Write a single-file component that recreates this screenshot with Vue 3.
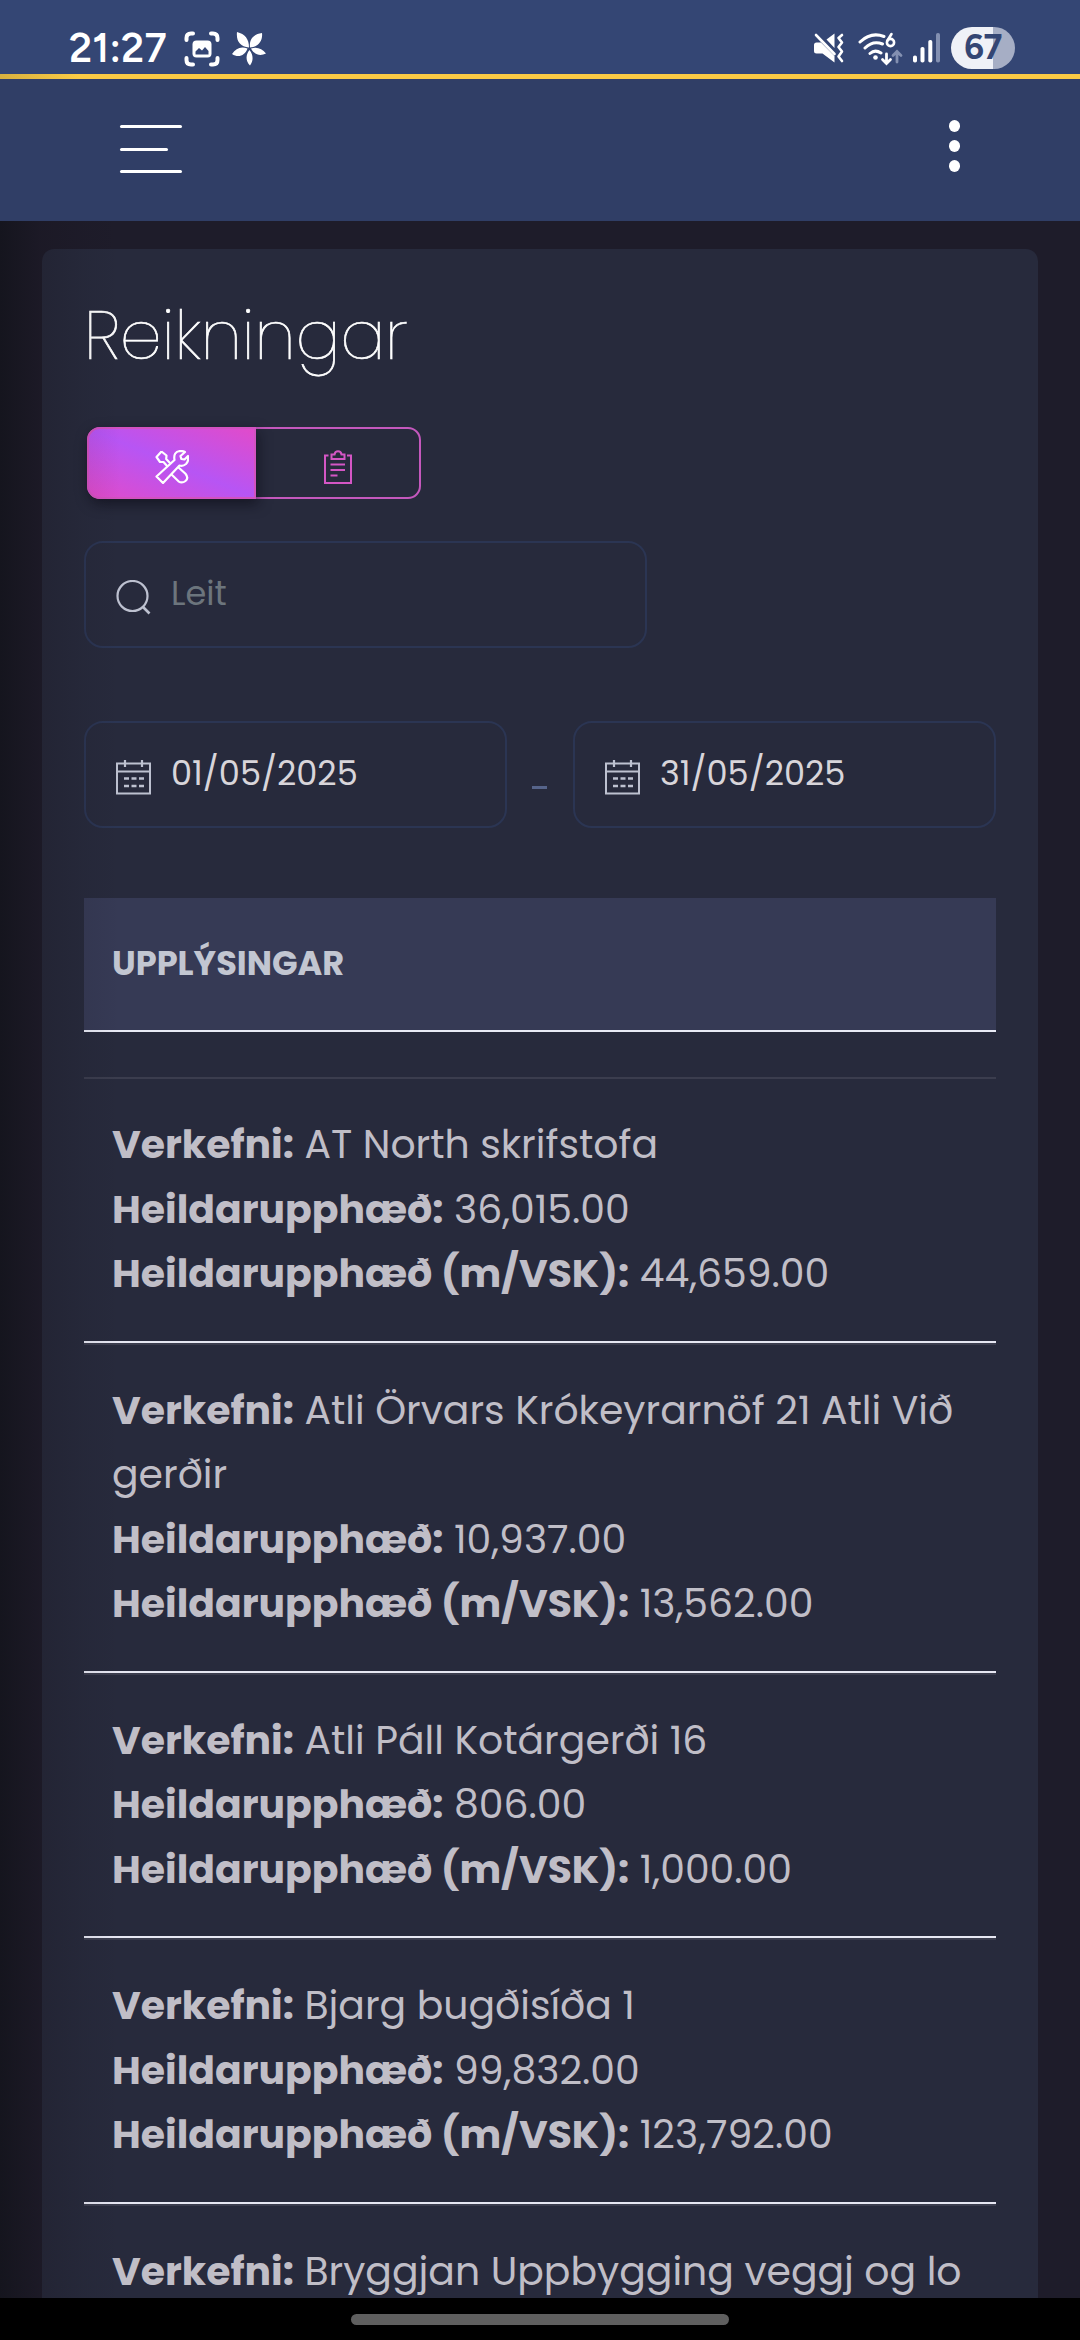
<script setup>
const rows = [
  { name: 'AT North skrifstofa', sum: '36,015.00', vat: '44,659.00' },
  { name: 'Atli Örvars Krókeyrarnöf 21 Atli Við gerðir', sum: '10,937.00', vat: '13,562.00' },
  { name: 'Atli Páll Kotárgerði 16', sum: '806.00', vat: '1,000.00' },
  { name: 'Bjarg bugðisíða 1', sum: '99,832.00', vat: '123,792.00' },
  { name: 'Bryggjan Uppbygging veggj og lo' },
]
</script>

<template>
  <div class="screen">
    <div class="status">
      <span class="clock">21:27</span>
      <svg class="shot" viewBox="0 0 36 36" width="36" height="36" fill="none" stroke="#fff" stroke-width="4" stroke-linecap="round">
        <path d="M2.5 9V7q0-4.500 4.500-4.500H9M27 2.500h2q4.500 0 4.500 4.500v2M33.500 27v2q0 4.500-4.500 4.500h-2M9 33.500H7q-4.500 0-4.500-4.500v-2" />
        <rect x="8.500" y="9.500" width="19" height="17" rx="4" fill="#fff" stroke="none" />
        <path d="M11.500 23.500v-3l3.500-3.500 3 2.500 3-3.500 3.500 4v3.500z" fill="#354675" stroke="none" />
      </svg>
      <svg class="flower" viewBox="0 0 34 34" width="34" height="34" fill="#fff">
        <path d="M17 15.500C8 15 4 9 5 0c8 2 12 7 12 15.500zM18 15.500C17 8 21 2 30 1c1 8-4 14-12 14.500zM19 16.500c6-2 11 0 15 5-6 3-12 1-15-5zM15.500 16.500C9 14 4 16 0 22c6 4 13 2 15.500-5.500zM17.500 18c4 5 4 11 .5 15.500C13.500 29 13.500 23 17.500 18z" />
      </svg>
      <div class="sys">
        <svg viewBox="0 0 30 30" width="30" height="30">
          <path fill="#fff" d="M0 12q0-2.500 2.500-2.500H7L20.500 23v6.500L8.500 20.500h-6Q0 20.500 0 18zM12.500 6.500l8-6V15z" />
          <path d="M2 2l18.500 19" fill="none" stroke="#fff" stroke-width="2.600" stroke-linecap="round" />
          <path d="M28 2l-3.500 3 3.500 4.500-3.500 4.500L28 18.500 24.500 23.500 28 28" fill="none" stroke="#fff" stroke-width="2.600" stroke-linecap="round" stroke-linejoin="round" />
        </svg>
        <svg class="wifi" viewBox="0 0 46 34" width="46" height="34" fill="none" stroke="#fff" stroke-width="3" stroke-linecap="round">
          <path d="M2 10Q13-.5 26 4.500M7 16q8-8 17.500-4M12 21.500q5-4.500 11-.5" />
          <circle cx="17.500" cy="25.500" r="2.300" fill="#fff" stroke="none" />
          <path d="M33.500 2l-4 6.500" stroke-width="2.600" /><circle cx="32.500" cy="10.500" r="3.600" stroke-width="2.600" />
          <path d="M28.500 22v9.500M24.500 27.500l4 4 4-4" stroke-width="2.800" />
          <path d="M39 30v-10.500M35 23.500l4-4 4 4" stroke="#8390b1" stroke-width="2.800" />
        </svg>
        <svg class="signal" viewBox="0 0 28 30" width="28" height="30">
          <g fill="#fff"><rect x="0" y="22.500" width="4" height="7" rx="1.800" /><rect x="7.500" y="14" width="4" height="15.500" rx="1.800" /><rect x="15.300" y="7" width="4" height="22.500" rx="1.800" /></g>
          <rect x="23" y="0" width="4" height="29.500" rx="1.800" fill="#8390b1" />
        </svg>
        <div class="battery">67</div>
      </div>
    </div>

    <header class="bar">
      <div class="menu"><i></i><i class="short"></i><i></i></div>
      <div class="dots"><i></i><i></i><i></i></div>
    </header>

    <main class="page">
      <section class="card">
        <h1>Reikningar</h1>
        <div class="toggle">
          <div class="on">
            <svg viewBox="0 0 34 34" width="34" height="34" fill="none" stroke="#fff" stroke-width="2.200" stroke-linejoin="round">
              <path d="M6.500 1.500l5 4-.3 3.500 4 4.200M12.500 16.500L8.500 12H5L1.500 7l5-5.500" />
              <path d="M16.500 24.500l7 6.800q3.500 2.500 7-.3t0-7.200L23 17" />
              <path d="M1.500 26.500L19.500 10Q18 1.500 25.500 1q2.500 0 4.500 1L25.500 6l.8 3 3.200.5L33 6q1 5-2 8-3 2.500-6.500 1.500L8 33z" />
            </svg>
          </div>
          <div class="off">
            <svg viewBox="0 0 28 34" width="28" height="34" fill="none" stroke="#d456c5" stroke-width="2">
              <path d="M4.500 5.500H1v27.500h26V5.500h-4" />
              <path d="M7.500 9V4.500h3Q11 1.200 14 1.200t3.500 3.300h3V9zM6.500 14.500h14.500M6.500 20H21M6.500 25.500h7" />
            </svg>
          </div>
        </div>

        <div class="field search">
          <svg viewBox="0 0 35 35" width="35" height="35" fill="none" stroke="#bdc1d0" stroke-width="2.200">
            <circle cx="16.500" cy="16" r="15" /><path d="M26.500 26.500l7 7" stroke-width="2.600" />
          </svg>
          <span class="hint">Leit</span>
        </div>

        <div class="dates">
          <template v-for="(d, i) in ['01/05/2025', '31/05/2025']" :key="d">
            <span v-if="i" class="dash"></span>
            <div class="field">
              <svg viewBox="0 0 35 35" width="35" height="35" fill="none" stroke="#bdc1d0" stroke-width="2">
                <path d="M1 3.500h33v30H1zM1 11.500h33" /><path d="M9 0v7M26 0v7" stroke-width="2.200" />
                <path d="M8 18.500h5m2.500 0h5m2.500 0h5M8 26h5m2.500 0h5m2.500 0h5" stroke-width="2.400" />
              </svg>
              <span>{{ d }}</span>
            </div>
          </template>
        </div>

        <div class="thead">UPPLÝSINGAR</div>
        <div class="spacer"></div>
        <div v-for="r in rows" :key="r.name" class="row">
          <p><b>Verkefni:</b> {{ r.name }}</p>
          <template v-if="r.sum">
            <p><b>Heildarupphæð:</b> {{ r.sum }}</p>
            <p><b>Heildarupphæð (m/VSK):</b> {{ r.vat }}</p>
          </template>
        </div>
      </section>
    </main>

    <footer class="nav"><i></i></footer>
  </div>
</template>

<style>
body { margin: 0; background: #1e1c2a; }
</style>

<style scoped>
* { box-sizing: border-box; }
.screen {
  width: 1080px;
  height: 2340px;
  overflow: hidden;
  display: flex;
  flex-direction: column;
  font-family: Poppins, Inter, "Open Sans", sans-serif;
}
svg { display: block; flex: none; }
.status {
  height: 79px;
  flex: none;
  display: flex;
  align-items: flex-start;
  background: #344674;
  border-bottom: 5px solid #fbcb45;
  border-image: linear-gradient(90deg, #d7b03f, #fbcb45 80px) 1;
  color: #fff;
  padding-left: 69px;
}
.clock {
  width: 98px;
  font-family: Figtree, Inter, "Open Sans", sans-serif;
  font-size: 40.500px;
  font-weight: 600;
  letter-spacing: 0.200px;
  line-height: 48px;
  margin-top: 24px;
  white-space: nowrap;
}
.shot { margin: 31px 0 0 17px; }
.flower { margin: 32px 0 0 12px; }
.sys { margin-left: auto; display: flex; padding: 27px 65px 0 0; }
.sys > svg { margin-top: 6px; }
.sys .wifi { margin: 5px 0 0 14px; }
.sys .signal { margin-left: 9px; }
.battery {
  margin-left: 10px;
  width: 64px;
  height: 42px;
  border-radius: 21px;
  background: linear-gradient(90deg, #eff1f7 42px, #a6aec5 42px);
  color: #344674;
  font-family: Figtree, Inter, "Open Sans", sans-serif;
  font-weight: 700;
  font-size: 34px;
  letter-spacing: -0.500px;
  line-height: 42px;
  text-align: center;
}
.bar {
  height: 142px;
  flex: none;
  background: #303e66;
  display: flex;
  justify-content: space-between;
  padding: 41px 120px 0;
}
.menu { display: flex; flex-direction: column; gap: 19.500px; padding-top: 5px; }
.menu i { width: 62px; height: 3px; border-radius: 2px; background: #fff; }
.menu .short { width: 48px; }
.dots { display: flex; flex-direction: column; gap: 8.500px; }
.dots i { width: 11px; height: 11.500px; border-radius: 50%; background: #fff; }
.page {
  flex: 1;
  min-height: 0;
  overflow: hidden;
  padding: 28px 42px 0;
  background: #1e1c2a;
  position: relative;
}
.page::after {
  content: "";
  position: absolute;
  inset: 0 auto 0 0;
  width: 120px;
  background: linear-gradient(90deg, rgba(12, 14, 18, 0.5), rgba(20, 16, 24, 0.22) 40px, rgba(20, 16, 24, 0.07) 85px, rgba(20, 16, 24, 0));
}
.card {
  height: 2200px;
  background: #272a3c;
  border-radius: 12px;
  padding: 0 42px;
}
h1 {
  margin: 0;
  height: 178px;
  padding: 42px 0 0;
  font-size: 66.800px;
  line-height: 90px;
  font-weight: 200;
  -webkit-text-stroke: 0.700px #fff;
  color: #fff;
}
.toggle {
  width: 334px;
  height: 72px;
  margin-left: 3px;
  border: 2px solid #c458bd;
  border-radius: 13px;
  display: flex;
}
.toggle > div { display: flex; justify-content: center; padding-top: 21px; }
.on {
  width: 169px;
  margin: -2px 0 -2px -2px;
  border: 2px solid #d252c0;
  border-radius: 13px 0 0 13px;
  background: linear-gradient(to top right, #e14bca, #b755f4 50%, #e14bca);
  box-shadow: 2px 5px 13px rgba(10, 10, 20, 0.6);
}
.off { flex: 1; }
.field {
  height: 107px;
  border: 2px solid #2b3553;
  border-radius: 19px;
  display: flex;
  padding: 37px 0 0 30px;
  font-size: 33.600px;
  line-height: 40px;
  color: #d8d5da;
}
.field span { margin-left: 20px; margin-top: -6.500px; }
.field .hint { color: #6c757d; }
.search { width: 563px; margin-top: 42px; }
.dates { display: flex; margin-top: 73px; }
.dates .field { width: 423px; }
.dash { width: 15px; height: 3px; margin: 65px 26px 0 25px; background: #56648a; }
.thead {
  margin-top: 70px;
  height: 134px;
  background: #363a55;
  border-bottom: 2px solid #e9ebf6;
  padding: 45.500px 28px 0;
  font-size: 33.600px;
  line-height: 40px;
  font-weight: 700;
  color: #c2c6d1;
}
.spacer { height: 45px; }
.row {
  border-top: 2px solid #3b3d4e;
  border-bottom: 2px solid #e6e7f3;
  padding: 34px 28px 34.120px;
  color: #c0bec7;
  font-size: 39.375px;
  line-height: 64.500px;
}
.row p { margin: 0; }
.row b { font-weight: 700; }
.nav { height: 42px; flex: none; background: #000; display: flex; justify-content: center; padding-top: 16px; }
.nav i { width: 378px; height: 11px; border-radius: 6px; background: #5f5f5f; }
</style>
